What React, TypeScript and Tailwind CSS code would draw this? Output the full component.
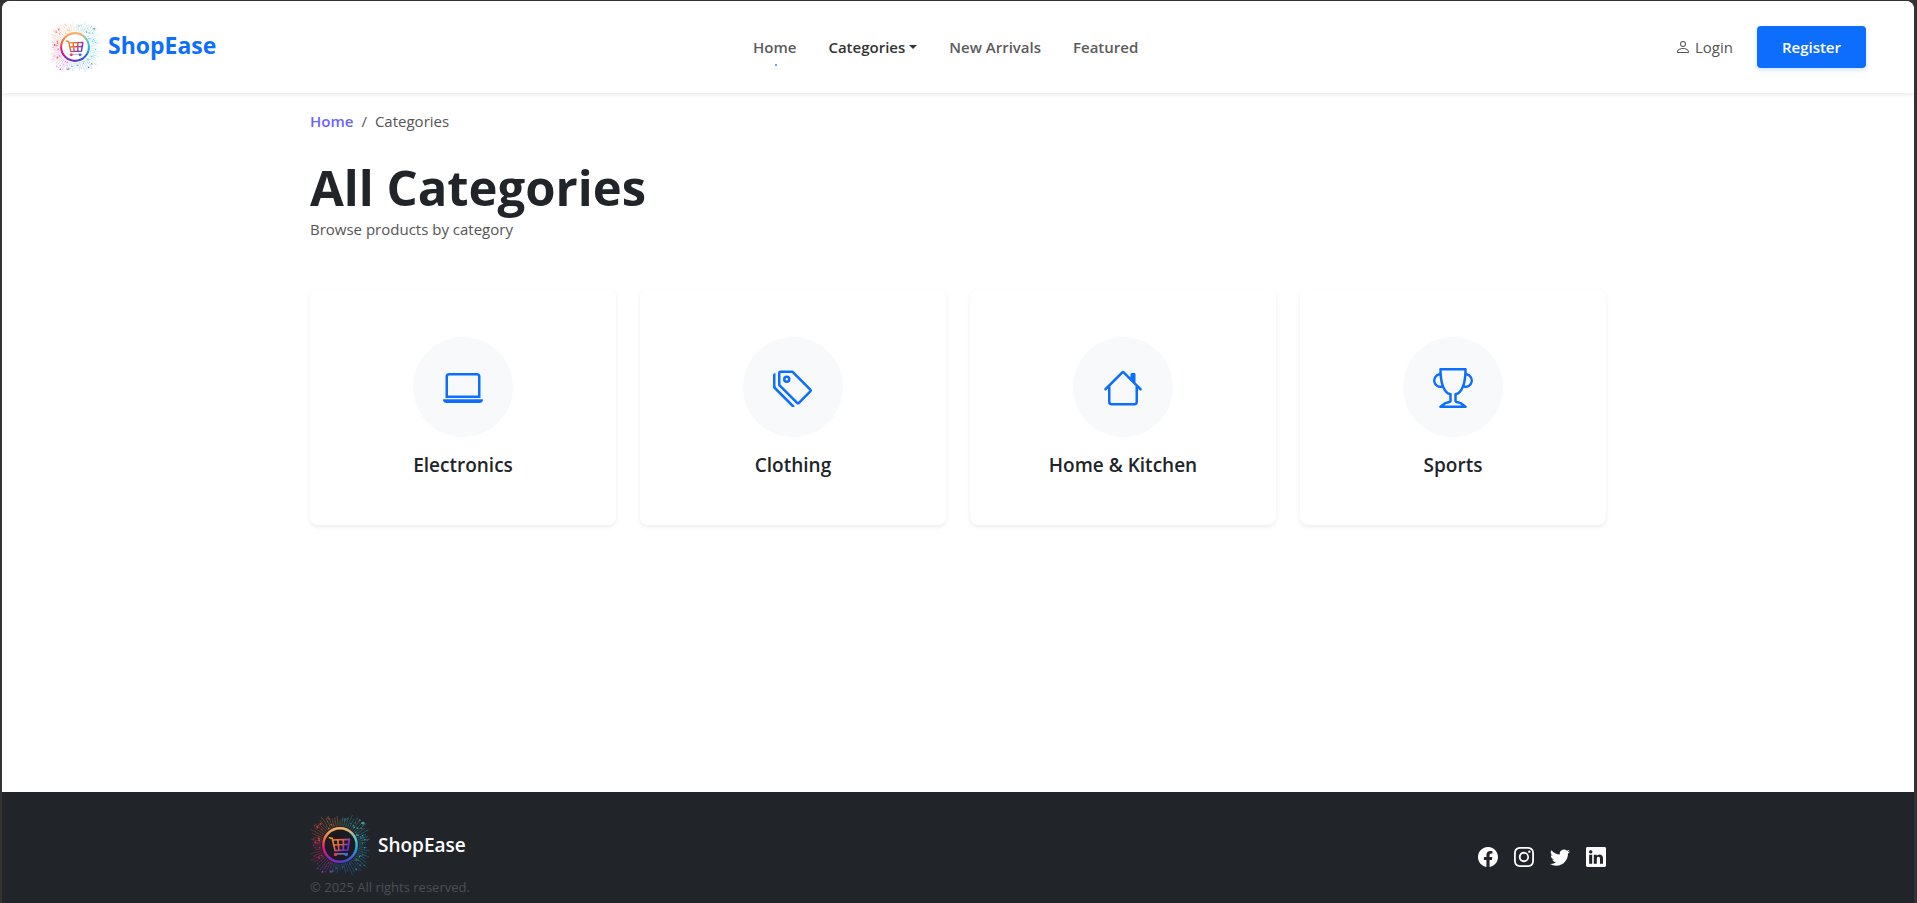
import type { ReactNode } from "react";
import {
  BsFacebook,
  BsHouse,
  BsInstagram,
  BsLaptop,
  BsLinkedin,
  BsPerson,
  BsTags,
  BsTrophy,
  BsTwitter,
} from "react-icons/bs";

type Dot = { x: number; y: number; r: number; fill: string; opacity: number };

function colorAt(angle: number): string {
  // 0 = right, clockwise
  const turn = ((angle / (Math.PI * 2)) % 1 + 1) % 1;
  if (turn < 0.12) return "#22b8d6";
  if (turn < 0.3) return "#2f7fd0";
  if (turn < 0.4) return "#b13cc4";
  if (turn < 0.52) return "#e6266e";
  if (turn < 0.64) return "#f0503c";
  if (turn < 0.76) return "#f08a4a";
  if (turn < 0.9) return "#46b4b0";
  return "#3cc8e6";
}

function makeDots(): Dot[] {
  const dots: Dot[] = [];
  let seed = 11;
  const next = () => {
    seed = (seed * 16807) % 2147483647;
    return seed / 2147483647;
  };
  while (dots.length < 170) {
    const x = 1 + next() * 98;
    const y = 1 + next() * 98;
    const size = 0.5 + next() * next() * 2;
    const opacity = 0.35 + next() * 0.6;
    const distance = Math.hypot(x - 50, y - 50);
    if (distance < 35 || distance > 58) continue;
    dots.push({ x, y, r: size, fill: colorAt(Math.atan2(y - 50, x - 50)), opacity });
  }
  return dots;
}

const dots = makeDots();
const rays = Array.from({ length: 64 }, (_, i) => {
  const angle = (i / 64) * Math.PI * 2;
  const diagonal = Math.abs(Math.sin(2 * angle));
  const end = 42 + ((i * 7) % 5) * 2 + diagonal * 12;
  return {
    x1: 50 + Math.cos(angle) * 34,
    y1: 50 + Math.sin(angle) * 34,
    x2: 50 + Math.cos(angle) * end,
    y2: 50 + Math.sin(angle) * end,
    stroke: colorAt(angle),
  };
});

function Logo({ id, dark, className }: { id: string; dark?: boolean; className: string }) {
  return (
    <svg viewBox="-4 -4 108 108" className={className} aria-hidden="true">
      <defs>
        <linearGradient id={`${id}-left`} x1="0" y1="0" x2="0" y2="1">
          <stop offset="0" stopColor="#f7b267" />
          <stop offset="0.3" stopColor="#f5703a" />
          <stop offset="0.6" stopColor="#e3127e" />
          <stop offset="1" stopColor="#7a2bc8" />
        </linearGradient>
        <linearGradient id={`${id}-right`} x1="0" y1="0" x2="0" y2="1">
          <stop offset="0" stopColor="#f7b267" />
          <stop offset="0.3" stopColor="#5fc9c4" />
          <stop offset="0.6" stopColor="#1fa8e0" />
          <stop offset="1" stopColor="#4a3fd0" />
        </linearGradient>
        <linearGradient id={`${id}-cart`} x1="0" y1="0" x2="1" y2="0.5">
          <stop offset="0" stopColor="#f79a1e" />
          <stop offset="0.5" stopColor="#e8603c" />
          <stop offset="1" stopColor="#6a2fd6" />
        </linearGradient>
      </defs>
      <g opacity={dark ? 0.4 : 0.32} strokeWidth="1.4">
        {rays.map((ray, i) => (
          <line key={i} {...ray} />
        ))}
      </g>
      {dots.map((dot, i) => (
        <circle key={i} cx={dot.x} cy={dot.y} r={dot.r} fill={dot.fill} opacity={dot.opacity} />
      ))}
      <circle cx="50" cy="50" r="30" fill={dark ? "#1b1c22" : "#ffffff"} />
      <path d="M50 20A30 30 0 0 0 50 80" fill="none" stroke={`url(#${id}-left)`} strokeWidth="4.5" />
      <path d="M50 20A30 30 0 0 1 50 80" fill="none" stroke={`url(#${id}-right)`} strokeWidth="4.5" />
      <g fill="none" stroke={`url(#${id}-cart)`} strokeWidth="3" strokeLinecap="round" strokeLinejoin="round">
        <path d="M31 37L36 38L41 60L64 59L67 40L37 41" />
        <path d="M39 50L65 49M46 41L48 59M56 41L56 59" />
      </g>
      <path d="M40 66H64" stroke={dark ? "#a99ae0" : "#b9a2e8"} strokeWidth="2" />
      <circle cx="42" cy="67" r="3.2" fill="#e0356e" />
      <circle cx="61" cy="67" r="3.2" fill="#3a6fe0" />
    </svg>
  );
}

const categories: { name: string; icon: ReactNode }[] = [
  { name: "Electronics", icon: <BsLaptop /> },
  { name: "Clothing", icon: <BsTags /> },
  { name: "Home & Kitchen", icon: <BsHouse /> },
  { name: "Sports", icon: <BsTrophy /> },
];

const socials: { name: string; icon: ReactNode }[] = [
  { name: "Facebook", icon: <BsFacebook /> },
  { name: "Instagram", icon: <BsInstagram /> },
  { name: "Twitter", icon: <BsTwitter /> },
  { name: "LinkedIn", icon: <BsLinkedin /> },
];

function Header() {
  return (
    <header className="flex h-[92px] items-center justify-between bg-white px-12 shadow-[0_2px_4px_rgba(0,0,0,0.08)]">
      <a href="#home" className="flex items-center gap-2 text-[23px] font-bold text-[#0d6efd]">
        <Logo id="header-logo" className="size-[50px]" />
        <span className="pb-1">ShopEase</span>
      </a>
      <nav aria-label="Main" className="flex items-center gap-8 text-[15px] font-semibold text-[#5c5c5c]">
        <a href="#home" className="relative">
          Home
          <span className="absolute -bottom-2 left-1/2 size-0.5 bg-[#0d6efd]/60" />
        </a>
        <button type="button" className="flex items-center gap-1 text-[#333]">
          Categories
          <span className="border-x-4 border-t-4 border-x-transparent border-t-[#333]" />
        </button>
        <a href="#new">New Arrivals</a>
        <a href="#featured">Featured</a>
      </nav>
      <div className="flex items-center justify-end gap-6 text-[15px]">
        <a href="#login" className="flex items-center gap-1 text-[#555]">
          <BsPerson className="size-4" />
          Login
        </a>
        <button
          type="button"
          className="h-[42px] rounded bg-[#0d6efd] px-[25px] font-semibold text-white shadow-[0_2px_5px_rgba(13,110,253,0.2)]"
        >
          Register
        </button>
      </div>
    </header>
  );
}

export default function App() {
  return (
    <div className="min-h-screen bg-[#333] pt-px pr-[3px] pl-0.5 font-['Open_Sans','Noto_Sans',sans-serif] text-[#212529]">
      <div className="flex min-h-[calc(100vh-1px)] flex-col overflow-hidden rounded-t-lg bg-white">
        <Header />
        <main className="mx-auto w-full max-w-[1320px] flex-1 px-3">
          <nav aria-label="Breadcrumb" className="pt-4 text-[15px] leading-6">
            <ol className="flex gap-2 text-[#555]">
              <li>
                <a href="#home" className="font-semibold text-[#6c63ff]">
                  Home
                </a>
              </li>
              <li aria-hidden="true">/</li>
              <li aria-current="page">Categories</li>
            </ol>
          </nav>
          <h1 className="mt-6 text-[49px] leading-[60px] font-bold">All Categories</h1>
          <p className="text-[15px] leading-6 text-[#555]">Browse products by category</p>
          <ul className="mt-12 grid grid-cols-4 gap-6">
            {categories.map((category) => (
              <li key={category.name}>
                <a
                  href="#category"
                  className="flex flex-col items-center rounded-lg p-12 shadow-[0_2px_4px_rgba(0,0,0,0.075)]"
                >
                  <span className="flex size-[100px] items-center justify-center rounded-full bg-[#f8f9fa] pt-0.5 text-[40px] text-[#0d6efd]">
                    {category.icon}
                  </span>
                  <h2 className="mt-4 text-[19px] leading-6 font-semibold">{category.name}</h2>
                </a>
              </li>
            ))}
          </ul>
        </main>
        <footer className="bg-[#212529] text-white">
          <div className="mx-auto flex h-[111px] w-full max-w-[1320px] items-start justify-between px-3 pt-[23px]">
            <div>
              <a href="#home" className="flex items-center gap-2 text-[19px] font-semibold">
                <Logo id="footer-logo" dark className="size-[60px]" />
                ShopEase
              </a>
              <p className="text-[13px] leading-6 text-[#4b5055]">© 2025 All rights reserved.</p>
            </div>
            <ul className="flex gap-4 pt-8 text-xl">
              {socials.map((social) => (
                <li key={social.name}>
                  <a href="#social" aria-label={social.name}>
                    {social.icon}
                  </a>
                </li>
              ))}
            </ul>
          </div>
        </footer>
      </div>
    </div>
  );
}
